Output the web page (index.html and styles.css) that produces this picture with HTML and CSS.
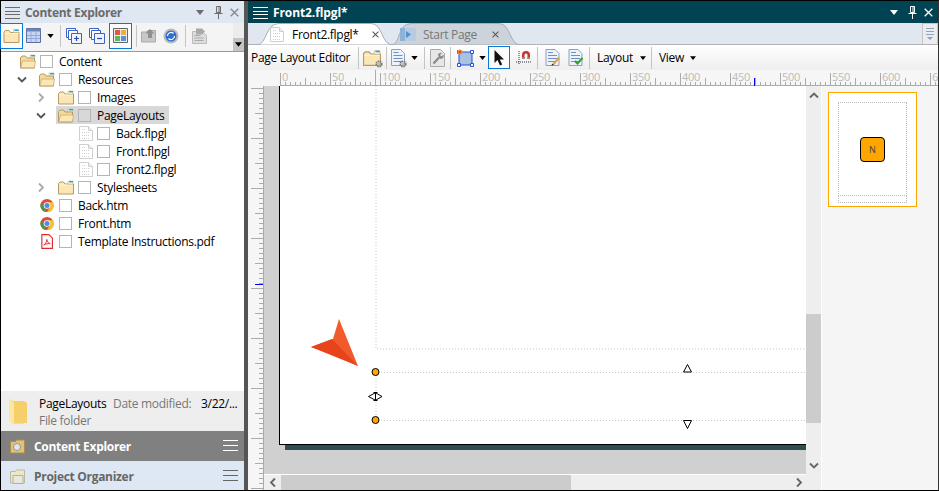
FILE: index.html
```html
<!DOCTYPE html>
<html lang="en">
<head>
<title>Front2.flpgl</title>
<meta charset="utf-8" />
<link rel="stylesheet" href="styles.css">
</head>
<body>
<svg class="defs" width="0" height="0">
  <symbol id="burger" viewBox="0 0 15 12"><path d="M0 .5h15M0 4.500h15M0 7.500h15M0 11.500h15" stroke="currentColor" fill="none"/></symbol>
  <symbol id="burger3" viewBox="0 0 15 12"><path d="M0 .5h15M0 5.500h15M0 10.500h15" stroke="currentColor" fill="none"/></symbol>
  <symbol id="tri" viewBox="0 0 8 5"><path d="M0 0h8L4 5z" fill="currentColor"/></symbol>
  <symbol id="pin" viewBox="0 0 9 13"><path d="M2.500 .5h4v6h-4zM.5 7.500h8M4.500 8v5M5 1v5" stroke="currentColor" fill="none"/></symbol>
  <symbol id="close" viewBox="0 0 9 9"><path d="M.7.7l7.600 7.600M8.300.7L.7 8.300" stroke="currentColor" stroke-width="1.300" fill="none"/></symbol>
  <symbol id="open-folder" viewBox="0 0 16 14"><path d="M.5 3V13.500H14.500V3.500H7L5.500 1.500H2z" fill="#f4d999" stroke="#b59a62"/><path d="M.8 13.300L2.500 6.500H15.500L14.500 13.300z" fill="#fbe7b6" stroke="#c2a66b" stroke-width=".7"/><path d="M10 .5h5v2.500h-5z" fill="#fff" stroke="#c2a66b" stroke-width=".5"/><path d="M11 .5h4v1.500h-4z" fill="#32a6c4"/></symbol>
  <symbol id="folder" viewBox="0 0 16 14"><path d="M.5 3V13.500H15.500V3.500H7L5.500 1.500H2z" fill="#fbe6b5" stroke="#b59a62"/><path d="M1 4.500h14" stroke="#fff3d3"/><path d="M10 .5h5v3h-5z" fill="#fff" stroke="#c2a66b" stroke-width=".5"/><path d="M11 .5h4v1.500h-4z" fill="#32a6c4"/></symbol>
  <symbol id="flpgl" viewBox="0 0 14 15"><path d="M.5.5h9l4 4v10H.5z" fill="#fff" stroke="#cfcfcf"/><path d="M9.500.5v4h4" fill="#eee" stroke="#cfcfcf"/><path d="M3 3.500h4M3 6.500h8M3 9.500h8M3 12.500h8" stroke="#d0d0d0" stroke-dasharray="1 1"/></symbol>
  <symbol id="chrome" viewBox="0 0 16 16"><circle cx="8" cy="8" r="7" fill="#dd4b3e"/><path d="M2 4.400L5 10.500 8 15A7 7 0 0 1 2 4.400z" fill="#3f9e48"/><path d="M8 4.500H14.400A7 7 0 0 1 8 15l3.200-5z" fill="#f3c32e"/><circle cx="8" cy="8" r="3.500" fill="#fff"/><circle cx="8" cy="8" r="2.700" fill="#4b8bf0"/></symbol>
  <symbol id="pdf" viewBox="0 0 14 16"><path d="M1.500.7h7.500l3.800 3.800v10.800H1.500z" fill="#fff" stroke="#e02b2b" stroke-width="1.200"/><path d="M3.500 11.800c2-1 3.200-3.500 3.300-6 .6 2.500 1.500 3.700 3.500 4.500-2.500-.3-4.500.2-6.800 1.500z" fill="none" stroke="#e02b2b"/></symbol>
  <symbol id="sheets" viewBox="0 0 16 16"><path d="M.5.5h9v9h-9z" fill="#fff" stroke="#3b62c6"/><path d="M2.500 2.500h9v9h-9z" fill="#fff" stroke="#3b62c6"/><path d="M5.500 5.500h10v10h-10z" fill="#eef3ff" stroke="#3b62c6"/></symbol>
  <symbol id="gear" viewBox="0 0 8 8"><circle cx="4" cy="4" r="2.700" fill="none" stroke="#777" stroke-width="1.800" stroke-dasharray="1.500 .7"/><circle cx="4" cy="4" r="1.500" fill="#bbb"/></symbol>
  <symbol id="doc" viewBox="0 0 14 17"><path d="M.5.5h9l4 4v12H.5z" fill="#eef3fb" stroke="#8ea0bd"/><path d="M2.500 3.500h5M2.500 6.500h9M2.500 9.500h9M2.500 12.500h9" stroke="#6f8fc8"/></symbol>
  <symbol id="chev" viewBox="0 0 10 7"><path d="M1 1.500l4 4 4-4" fill="none" stroke="currentColor" stroke-width="1.800"/></symbol>
</svg>

<div class="app">
  <aside class="left">
    <div class="panel-title">
      <svg class="burger"><use href="#burger"/></svg>
      <b class="panel-name">Content Explorer</b>
      <svg class="win-tri"><use href="#tri"/></svg>
      <svg class="win-pin"><use href="#pin"/></svg>
      <svg class="win-x"><use href="#close"/></svg>
    </div>

    <div class="ce-tools">
      <span class="tool on first"><svg width="17" height="14"><use href="#folder"/></svg></span>
      <svg class="g3" width="15" height="15" viewBox="0 0 15 15"><path d="M.5.5h14v14H.5z" fill="#c7d5f3" stroke="#5d6f9c"/><path d="M.5.5h14v3H.5z" fill="#6e84b8"/><path d="M1 7.500h13M1 10.500h13M5 4v10M10 4v10" stroke="#94a9dc"/></svg>
      <svg class="g6 arrow"><use href="#tri"/></svg>
      <i class="sep g6"></i>
      <svg class="g5" width="16" height="16" viewBox="0 0 16 16"><use href="#sheets"/><path d="M8 10.500h5M10.500 8v5" stroke="#2a4cae" stroke-width="1.200"/></svg>
      <svg class="g7" width="16" height="16" viewBox="0 0 16 16"><use href="#sheets"/><path d="M8 10.500h5" stroke="#2a4cae" stroke-width="1.200"/></svg>
      <span class="tool on g4"><svg width="15" height="15" viewBox="0 0 15 15"><path d="M.5.5h14v14H.5z" fill="#eee" stroke="#666"/><path d="M2 2h5v5H2z" fill="#e0564a"/><path d="M8 2h5v5H8z" fill="#f1b02e"/><path d="M2 8h5v5H2z" fill="#5cb85c"/><path d="M8 8h5v5H8z" fill="#5c8fdc"/></svg></span>
      <i class="sep g4"></i>
      <svg class="g4" width="16" height="15" viewBox="0 0 16 15"><path d="M.5 4h5l1-1.500h8V14H.5z" fill="#c8c8c8" stroke="#aaa"/><path d="M9 1l4.500 4.500H11V10H7V5.500H4.500z" fill="#8f8f8f"/></svg>
      <svg class="g6" width="16" height="16" viewBox="0 0 16 16"><circle cx="8" cy="8" r="7.500" fill="#bbb"/><circle cx="8" cy="8" r="5.500" fill="#2f6fd0"/><path d="M4.500 8a3.500 3.500 0 0 1 6-2.500M11.500 8a3.500 3.500 0 0 1-6 2.500" stroke="#fff" fill="none" stroke-width="1.200"/></svg>
      <i class="sep g6"></i>
      <svg class="g6" width="15" height="16" viewBox="0 0 15 16"><path d="M.5 3.500h10l4 4v8H.5z" fill="#ddd" stroke="#bbb"/><path d="M2.500 7.500h6M2.500 10h9M2.500 12.500h9" stroke="#aaa"/><path d="M4 .5h6l3 3-3 3H4z" fill="#aaa"/></svg>
      <span class="overflow"><svg class="overflow-tri"><use href="#tri"/></svg></span>
    </div>

    <div class="tree">
      <div class="row"><span class="node"><svg class="ico"><use href="#open-folder"/></svg><i class="cb"></i><span>Content</span></span></div>
      <div class="row"><svg class="caret down"><use href="#chev"/></svg><span class="node"><svg class="ico"><use href="#open-folder"/></svg><i class="cb"></i><span>Resources</span></span></div>
      <div class="row lv2"><svg class="caret side"><use href="#chev"/></svg><span class="node"><svg class="ico"><use href="#folder"/></svg><i class="cb"></i><span>Images</span></span></div>
      <div class="row lv2"><svg class="caret down"><use href="#chev"/></svg><span class="node sel"><svg class="ico"><use href="#open-folder"/></svg><i class="cb"></i><span>PageLayouts</span></span></div>
      <div class="row lv3"><span class="node"><svg class="ico file"><use href="#flpgl"/></svg><i class="cb"></i><span>Back.flpgl</span></span></div>
      <div class="row lv3"><span class="node"><svg class="ico file"><use href="#flpgl"/></svg><i class="cb"></i><span>Front.flpgl</span></span></div>
      <div class="row lv3"><span class="node"><svg class="ico file"><use href="#flpgl"/></svg><i class="cb"></i><span>Front2.flpgl</span></span></div>
      <div class="row lv2"><svg class="caret side"><use href="#chev"/></svg><span class="node"><svg class="ico"><use href="#folder"/></svg><i class="cb"></i><span>Stylesheets</span></span></div>
      <div class="row leaf"><span class="node"><svg class="ico"><use href="#chrome"/></svg><i class="cb"></i><span>Back.htm</span></span></div>
      <div class="row leaf"><span class="node"><svg class="ico"><use href="#chrome"/></svg><i class="cb"></i><span>Front.htm</span></span></div>
      <div class="row leaf"><span class="node"><svg class="ico"><use href="#pdf"/></svg><i class="cb"></i><span>Template Instructions.pdf</span></span></div>
    </div>

    <div class="info">
      <svg class="info-ico" width="18" height="27" viewBox="0 0 18 27"><path d="M0 0l5 2h10v23H5z" fill="#f9dd8c"/><path d="M5 2h10l3 2v20H5z" fill="#f5cf6a"/><path d="M0 0v22l5 5V5z" fill="#fbe6a6"/></svg>
      <div class="info-text">
        <div class="info-line"><span class="info-name">PageLayouts</span><span class="info-label">Date modified:</span><span>3/22/...</span></div>
        <div class="info-label">File folder</div>
      </div>
    </div>
    <div class="dock dock-on">
      <svg class="dock-ico" width="16" height="15" viewBox="0 0 16 15"><path d="M.5 2.500h5l1-1.500h8v13H.5z" fill="#e3c074" stroke="#a98f55"/><circle cx="7" cy="8" r="3.500" fill="#dfe6ee" stroke="#8a97a8"/></svg>
      <b class="dock-name">Content Explorer</b>
      <svg class="dock-menu"><use href="#burger3"/></svg>
    </div>
    <div class="dock dock-off">
      <svg class="dock-ico" width="16" height="15" viewBox="0 0 16 15"><path d="M.5 2.500h5l1-1.500h8v13H.5z" fill="#efe6c6" stroke="#bdb9a5"/><path d="M3 6.500h10v8H3z" fill="#e8e8dc" stroke="#b0b0a6"/></svg>
      <b class="dock-name">Project Organizer</b>
      <svg class="dock-menu"><use href="#burger3"/></svg>
    </div>
  </aside>

  <main class="right">
    <div class="doc-title">
      <svg class="burger"><use href="#burger"/></svg>
      <b class="panel-name">Front2.flpgl*</b>
      <svg class="win-tri"><use href="#tri"/></svg>
      <svg class="win-pin"><use href="#pin"/></svg>
      <svg class="win-x"><use href="#close"/></svg>
    </div>

    <div class="tabs">
      <div class="tab tab-back">
        <svg class="tab-bg" width="130" height="22" viewBox="0 0 130 22"><path d="M0 22C10 22 6 .5 20 .5H108C120 .5 118 22 130 22z" fill="#ccd3da" stroke="#a8adb3"/></svg>
        <svg class="tab-ico" width="16" height="13" viewBox="0 0 16 13"><path d="M0 0h16v13H0z" fill="#b9cbe0"/><path d="M0 0h5v13H0z" fill="#8fb2d6"/><path d="M6 3l5 3.500-5 3.500z" fill="#4f92d2"/></svg>
        <span class="tab-text">Start Page</span>
        <svg class="tab-x"><use href="#close"/></svg>
      </div>
      <div class="tab tab-front">
        <svg class="tab-bg" width="136" height="22" viewBox="0 0 136 22"><path d="M0 22C10 22 8 .5 22 .5H114C126 .5 124 22 136 22z" fill="#fff" stroke="#a8adb3"/></svg>
        <svg class="tab-ico" width="14" height="15"><use href="#flpgl"/></svg>
        <span class="tab-text">Front2.flpgl*</span>
        <svg class="tab-x"><use href="#close"/></svg>
      </div>
      <span class="tab-menu"><svg width="8" height="13" viewBox="0 0 8 13"><path d="M0 .5h8M0 3.500h8M0 6.500h8" stroke="#8ba3c7"/><path d="M1 9h6l-3 3z" fill="#8ba3c7"/></svg></span>
    </div>

    <div class="main-tools">
      <span class="tb-label">Page Layout Editor</span>
      <i class="sep g7"></i>
      <span class="g4 with-gear"><svg width="18" height="16"><use href="#folder"/></svg><svg class="gear"><use href="#gear"/></svg></span>
      <i class="sep g5"></i>
      <span class="g4 with-gear"><svg width="14" height="17"><use href="#doc"/></svg><svg class="gear"><use href="#gear"/></svg></span>
      <svg class="g6 arrow"><use href="#tri"/></svg>
      <i class="sep g6"></i>
      <svg class="g5" width="15" height="18" viewBox="0 0 15 18"><path d="M.5.5h10l4 4v13H.5z" fill="#e7e7e7" stroke="#aaa"/><path d="M3.500 14.500l5.500-6" stroke="#8a8a8a" stroke-width="2.200"/><path d="M8 6a3 3 0 0 1 4-2l-2 2 1.500 1.500 2-2a3 3 0 0 1-4 4z" fill="#8a8a8a"/></svg>
      <i class="sep g5"></i>
      <span class="g6 shape"><svg width="17" height="18" viewBox="0 0 17 18"><path d="M2 3h13v13H2z" fill="#a8c2e4" stroke="#2b4fd6"/><path d="M.5 1.500h3v3h-3zM13.500 1.500h3v3h-3zM.5 14.500h3v3h-3zM13.500 14.500h3v3h-3z" fill="#fff" stroke="#2b4fd6"/><circle cx="3" cy="3" r="2.500" fill="#f0922a"/><circle cx="3" cy="3" r="1.200" fill="#e23c1e"/></svg></span>
      <svg class="g5 arrow"><use href="#tri"/></svg>
      <span class="tool pick g2"><svg width="11" height="16" viewBox="0 0 11 16"><path d="M.5 0v13l3-3 2.500 5.500 2.200-1L5.800 9.500H10z" fill="#111"/></svg></span>
      <svg class="g6" width="16" height="16" viewBox="0 0 16 16"><path d="M6 9V5a4 4 0 0 1 8 0v4h-2.500V5a1.500 1.500 0 0 0-3 0v4z" fill="#c8342c"/><path d="M6 7h2.500v2H6zM11.500 7H14v2h-2.500z" fill="#888"/><path d="M3 1v13M0 12h16" stroke="#333" stroke-dasharray="1 1"/></svg>
      <i class="sep g5"></i>
      <svg class="g7" width="15" height="17" viewBox="0 0 15 17"><use href="#doc"/><path d="M7 15l6-7 2 1.500-6 6.500z" fill="#e6a33c"/><path d="M7 15l2 .5L6.500 17z" fill="#222"/></svg>
      <svg class="g8" width="15" height="17" viewBox="0 0 15 17"><use href="#doc"/><path d="M7 12l2.500 2.500L14.500 9" stroke="#2fa32f" stroke-width="2.200" fill="none"/></svg>
      <i class="sep g6"></i>
      <span class="tb-menu g7 layout-menu">Layout</span>
      <svg class="tb-arrow"><use href="#tri"/></svg>
      <i class="sep g5"></i>
      <span class="tb-menu g7 view-menu">View</span>
      <svg class="tb-arrow"><use href="#tri"/></svg>
    </div>

    <div class="hruler">
      <div class="hruler-scale">
        <span>0</span><span>50</span><span>100</span><span>150</span><span>200</span><span>250</span><span>300</span><span>350</span><span>400</span><span>450</span><span>500</span><span>550</span><span>600</span><span>650</span>
      </div>
      <i class="mark-orange"></i>
      <i class="mark-blue"></i>
    </div>

    <div class="work">
      <div class="vruler"><i class="mark-vblue"></i></div>
      <div class="canvas-col">
        <div class="canvas">
          <div class="page">
            <svg class="guides" width="526" height="358" viewBox="0 0 526 358">
              <g class="dots">
                <path d="M96 0V263H526"/>
                <path d="M96 286V334"/>
                <path d="M101 286.500H526"/>
                <path d="M101 334.500H526"/>
              </g>
              <circle cx="95.500" cy="286" r="3.500" fill="#ffa500" stroke="#000"/>
              <circle cx="95.500" cy="334" r="3.500" fill="#ffa500" stroke="#000"/>
              <path d="M88.500 310.500L95 307H96L102 310.500 96 314H95z" fill="#fff" stroke="#000"/>
              <path d="M95.500 306.500V315M93.500 306.500h4M93.500 314.500h4" stroke="#000" fill="none"/>
              <path d="M407.500 278.500l4 7.500h-8z" fill="#fff" stroke="#000"/>
              <path d="M403.500 334.500h8l-4 8z" fill="#fff" stroke="#000"/>
              <path d="M59 233L53 253 31 261 52 268 78 280z" fill="#f15a2b"/>
              <path d="M52 253L31 261 78 280z" fill="#e8441b"/>
            </svg>
          </div>
        </div>
        <div class="hscroll">
          <span class="sb-btn"><svg class="chev-left"><use href="#chev"/></svg></span>
          <span class="hthumb"></span>
          <svg class="chev-right"><use href="#chev"/></svg>
        </div>
      </div>
      <div class="vscroll">
        <svg class="chev-up"><use href="#chev"/></svg>
        <span class="vthumb"></span>
        <svg class="chev-down"><use href="#chev"/></svg>
      </div>
      <div class="thumbs">
        <div class="thumb">
          <div class="thumb-body"><span class="thumb-node">N</span></div>
          <div class="thumb-foot"></div>
        </div>
      </div>
    </div>
  </main>
</div>
</body>
</html>
```

FILE: styles.css
```css
* {box-sizing: border-box;}
html, body {margin: 0; padding: 0;}
body {width: 939px; height: 491px; overflow: hidden; font-family: "Open Sans", "Noto Sans", sans-serif; font-size: 12px; letter-spacing: -0.3px; color: #000;}
.defs {position: absolute;}
svg {display: block; flex: none;}
i {display: block; flex: none;}

.app {width: 939px; height: 491px; border: 1px solid #000; border-right-color: #333; background: #555; display: flex;}
.left {width: 243px; display: flex; flex-direction: column; background: #fff;}
.right {width: 690px; margin-left: 4px; display: flex; flex-direction: column; background: #fff;}

.g2 {margin-left: 2px;}
.g3 {margin-left: 3px;}
.g4 {margin-left: 4px;}
.g5 {margin-left: 5px;}
.g6 {margin-left: 6px;}
.g7 {margin-left: 7px;}
.g8 {margin-left: 8px;}

/* title bars */
.panel-title, .doc-title {height: 22px; flex: none; display: flex; align-items: center; padding-left: 4px;}
.panel-title {background: #dee7f2; color: #6b6b6b;}
.doc-title {background: #004353; color: #fff; padding-left: 5px;}
.burger {width: 15px; height: 12px; margin-top: 1px;}
.panel-name {margin-left: 5px; flex: 1; letter-spacing: -0.3px;}
.doc-title .panel-name {letter-spacing: -0.1px;}
.win-tri {width: 8px; height: 5px;}
.win-pin {width: 9px; height: 13px; margin-left: 10px;}
.win-x {width: 9px; height: 9px; margin-left: 7px; margin-right: 5px;}
.panel-title .win-x {color: #888;}

/* left toolbar */
.ce-tools {height: 29px; flex: none; display: flex; align-items: center; background: #f4f4f4; border-bottom: 1px solid #9a9a9a; padding-bottom: 3px; position: relative;}
.tool {height: 26px; display: flex; align-items: center; justify-content: center; border: 1px solid #0a78d7; background: #fbfbfb;}
.first {width: 23px; margin-left: -1px;}
.tool.g4 {width: 23px;}
.pick {width: 22px; height: 23px;}
.sep {width: 1px; height: 22px; background: #c4c4c4;}
.arrow {width: 7px; height: 4px;}
.overflow {position: absolute; right: 0; top: 0; bottom: 0; width: 11px; background: #ececec;}
.overflow-tri {position: absolute; right: 0; bottom: 0; width: 11px; height: 13px; padding: 4px 2px; background: #c4c4c4;}

/* tree */
.tree {flex: 1; background: #fff;}
.row {height: 18px; display: flex; align-items: center; padding-left: 19px;}
.row.lv2 {padding-left: 38px;}
.row.lv3 {padding-left: 76px;}
.row.leaf {padding-left: 38px;}
.caret {width: 10px; height: 7px; margin-right: 12px; margin-left: -3px; color: #555;}
.caret.side {transform: rotate(-90deg); color: #aaa;}
.node {height: 18px; display: flex; align-items: center; white-space: nowrap;}
.sel {background: #d8d8d8; margin-left: -2px; padding: 0 5px 0 2px;}
.ico {width: 16px; height: 15px; margin-right: 4px;}
.ico.file {width: 14px; margin: 0 4px 0 2px;}
.cb {width: 13px; height: 13px; border: 1px solid #b4b4b4; background: #fff; margin-right: 6px;}
.sel .cb {background: #d8d8d8;}

/* info + dock */
.info {height: 40px; flex: none; background: #eee; display: flex; padding: 8px 0 0 8px;}
.info-ico {margin-right: 12px;}
.info-text {flex: 1; margin-top: -5px;}
.info-line {display: flex; height: 19px; align-items: center;}
.info-name {width: 74px;}
.info-line .info-label {width: 88px;}
.info-label {color: #777; height: 15px; line-height: 15px;}
.dock {flex: none; display: flex; align-items: center; padding-left: 9px;}
.dock-on {height: 30px; background: #808080; color: #fff;}
.dock-off {height: 29px; background: #dee8f4; color: #666; padding-top: 1px;}
.dock-name {flex: 1; margin-left: 8px;}
.dock-menu {width: 15px; height: 12px; margin-right: 6px;}

/* tabs */
.tabs {height: 22px; flex: none; background: #e0e7f0; position: relative; border-bottom: 1px solid #b0b4b8; display: flex; padding-left: 9px;}
.tab {position: relative; height: 22px; display: flex; align-items: center; flex: none;}
.tab-bg {position: absolute; left: 0; top: 0;}
.tab-front {order: 1; width: 136px; padding-left: 13px;}
.tab-back {order: 2; width: 130px; margin-left: -2px; padding-left: 9px; color: #777;}
.tab-ico, .tab-text, .tab-x {position: relative;}
.tab-text {margin-left: 8px; width: 73px; white-space: nowrap;}
.tab-back .tab-text {margin-left: 7px; width: 62px;}
.tab-x {width: 7px; height: 7px; margin-left: 7px; color: #555;}
.tab-menu {position: absolute; right: 0; top: 0; width: 16px; height: 21px; background: #ececec; border: 1px solid #c4c8cc; border-bottom: 0; display: flex; align-items: center; justify-content: center;}

/* main toolbar */
.main-tools {height: 25px; flex: none; display: flex; align-items: center; padding-left: 3px; background: linear-gradient(#fff, #eeeeee);}
.tb-label {width: 100px; white-space: nowrap;}
.tb-menu {white-space: nowrap;}
.layout-menu {width: 43px;}
.view-menu {width: 31px;}
.tb-arrow {width: 6px; height: 4px;}
.with-gear {position: relative; display: block;}
.gear {position: absolute; right: -2px; bottom: -2px; width: 8px; height: 8px;}

/* rulers */
.hruler {height: 16px; flex: none; background: #f6f6f6; padding-left: 32px; position: relative;}
.hruler-scale {height: 16px; display: flex; color: #bbb; font-size: 11px; line-height: 13px; letter-spacing: -0.3px; overflow: hidden;
  background-image: linear-gradient(#aaa, #aaa), linear-gradient(90deg, #aaa 1px, transparent 1px), linear-gradient(90deg, #aaa 1px, transparent 1px), linear-gradient(90deg, #aaa 1px, transparent 1px);
  background-size: 100% 1px, 5px 4px, 50px 8px, 50px 13px;
  background-repeat: no-repeat, repeat-x, repeat-x, repeat-x;
  background-position: 0 bottom, 0 bottom, 25px bottom, 0 bottom;
}
.hruler-scale span {flex: none; width: 50px; padding-left: 2px;}
.mark-orange {position: absolute; left: 127px; top: 0; width: 1px; height: 16px; background: #ffa500;}
.mark-blue {position: absolute; left: 506px; top: 8px; width: 1px; height: 8px; background: #0000ff;}

/* work area */
.work {flex: 1; display: flex; min-height: 0;}
.vruler {width: 16px; flex: none; position: relative; background-color: #f6f6f6; border-right: 1px solid #aaa;
  background-image: linear-gradient(#aaa 1px, transparent 1px), linear-gradient(#aaa 1px, transparent 1px), linear-gradient(#aaa 1px, transparent 1px);
  background-size: 4px 5px, 8px 50px, 12px 50px;
  background-repeat: repeat-y;
  background-position: right 2px, right 27px, right 2px;
}
.mark-vblue {position: absolute; right: 0; top: 198px; width: 8px; height: 1px; background: #0000ff;}
.canvas-col {width: 542px; flex: none; display: flex; flex-direction: column;}
.canvas {flex: 1; background: #d0d0d0; padding-left: 15px; overflow: hidden; border-bottom: 1px solid #fff;}
.page {width: 540px; height: 359px; background: #fff; border-left: 1px solid #000; border-bottom: 1px solid #000; box-shadow: 6px 5px 0 #2f4f4f;}
.guides {overflow: visible;}
.dots path {fill: none; stroke: #c8c8c8; stroke-dasharray: 1 2;}
.hscroll {height: 15px; flex: none; background: #eee; display: flex; align-items: center;}
.sb-btn {width: 17px; height: 15px; display: flex; align-items: center; justify-content: center;}
.hthumb {width: 290px; height: 15px; background: #ccc;}
.chev-left, .chev-right, .chev-up, .chev-down {width: 10px; height: 7px; color: #666;}
.chev-left {transform: rotate(90deg);}
.chev-right {transform: rotate(-90deg); margin-left: 223px;}
.vscroll {width: 15px; flex: none; background: #eee; position: relative; margin-right: 1px;}
.chev-up {transform: rotate(180deg); position: absolute; left: 3px; top: 6px;}
.chev-down {position: absolute; left: 3px; top: 376px;}
.vthumb {position: absolute; left: 0; top: 228px; width: 15px; height: 109px; background: #ccc;}

/* thumbnail pane */
.thumbs {flex: 1; background: #f5f5f5; padding: 6px 0 0 6px;}
.thumb {width: 89px; height: 115px; background: #fff; border: 1px solid #ffa500; padding: 9px 9px 3px 9px; display: flex; flex-direction: column;}
.thumb-body {flex: 1; border: 1px dotted #bbb; display: flex; align-items: center; justify-content: center;}
.thumb-foot {height: 7px; flex: none; border: 1px dotted #bbb; border-top: 0;}
.thumb-node {width: 25px; height: 25px; background: #ffa500; border: 1px solid #000; border-radius: 4px; font-size: 9px; letter-spacing: 0; color: #444; display: flex; align-items: center; justify-content: center;}
```
